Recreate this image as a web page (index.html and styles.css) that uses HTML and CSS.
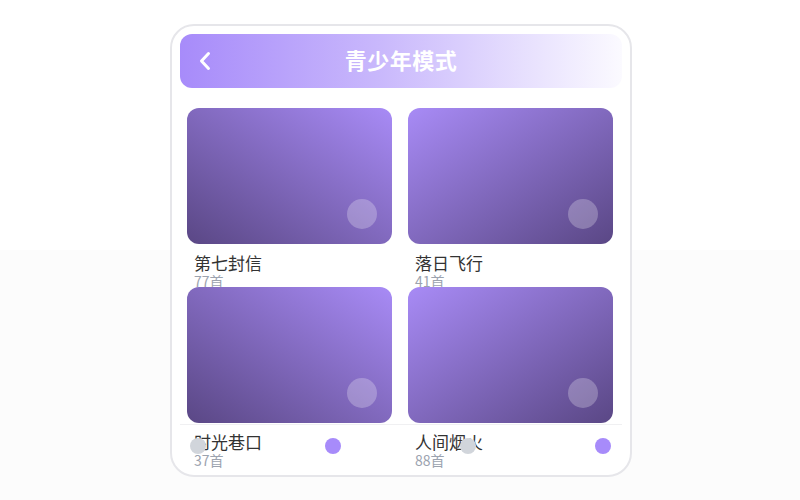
FILE: index.html
```html
<!DOCTYPE html>
<html lang="zh-CN">

<head>
     <meta charset="UTF-8">
     <meta name="viewport" content="width=device-width, initial-scale=1.0">
     <title>青少年模式</title>
     <link rel="stylesheet" href="styles.css">
</head>

<body>
     <div class="phone">
          <div class="top-bar">
               <span class="back">
                    <svg width="14" height="20" viewBox="0 0 14 20">
                         <path d="M10.5 2.5 L3.5 10 L10.5 17.5" fill="none" stroke="#fff" stroke-width="3"
                              stroke-linecap="round" stroke-linejoin="round" />
                    </svg>
               </span>
               <h1>青少年模式</h1>
          </div>

          <div class="album-grid">
               <div class="album">
                    <div class="cover cover-a"><span class="play"></span></div>
                    <div class="album-name">第七封信</div>
                    <div class="album-count">77首</div>
               </div>
               <div class="album">
                    <div class="cover cover-b"><span class="play"></span></div>
                    <div class="album-name">落日飞行</div>
                    <div class="album-count">41首</div>
               </div>
               <div class="album">
                    <div class="cover cover-a"><span class="play"></span></div>
                    <div class="album-name">时光巷口</div>
                    <div class="album-count">37首</div>
               </div>
               <div class="album">
                    <div class="cover cover-b"><span class="play"></span></div>
                    <div class="album-name">人间烟火</div>
                    <div class="album-count">88首</div>
               </div>
          </div>

          <!-- bottom indicator bar, sits over the list -->
          <div class="dock">
               <div class="dots">
                    <span class="dot"></span>
                    <span class="dot on"></span>
                    <span class="dot"></span>
                    <span class="dot on"></span>
               </div>
          </div>
     </div>
</body>

</html>
```

FILE: styles.css
```css
* {
     padding: 0;
     margin: 0;
     box-sizing: border-box;
     font-family: "Noto Sans CJK SC", "Noto Sans", sans-serif;
}

html,
body {
     width: 100%;
     height: 100%;
     overflow: hidden;
}

body {
     background: linear-gradient(to bottom, #ffffff 50%, #fcfcfc 50%);
     padding-top: 24px;
}

.phone {
     position: relative;
     width: 462px;
     height: 453px;
     margin-left: 170px;
     border: 2px solid #e6e6ea;
     border-radius: 24px;
     background: #fff;
     padding: 8px;
     overflow: hidden;
}

.top-bar {
     position: relative;
     height: 54px;
     border-radius: 12px;
     background: linear-gradient(to right, #a78bfa, #c9b8fc 45%, #fbfaff);
     display: flex;
     align-items: center;
     justify-content: center;
     padding-bottom: 4px;
}

.back {
     position: absolute;
     left: 18px;
     top: 17px;
     display: flex;
}

.top-bar h1 {
     font-size: 22px;
     font-weight: 700;
     color: #fff;
     letter-spacing: 0.5px;
}

.album-grid {
     display: grid;
     grid-template-columns: 205px 205px;
     grid-auto-rows: 179px;
     column-gap: 16px;
     padding: 20px 7px 0;
}

.album {
     height: 179px;
}

.cover {
     position: relative;
     height: 136px;
     border-radius: 12px;
}

.cover-a {
     background: linear-gradient(to bottom left, #a88bf6, #5a4785);
}

.cover-b {
     background: linear-gradient(to bottom right, #a88bf6, #5a4785);
}

.play {
     position: absolute;
     right: 15px;
     bottom: 15px;
     width: 30px;
     height: 30px;
     border-radius: 50%;
     background: rgba(255, 255, 255, 0.25);
}

.album-name {
     margin-top: 8px;
     padding-left: 7px;
     font-size: 17px;
     line-height: 22px;
     color: #333;
}

.album-count {
     padding-left: 7px;
     font-size: 14px;
     line-height: 14px;
     color: #9ca3af;
}

.dock {
     position: absolute;
     left: 8px;
     right: 8px;
     bottom: 8px;
     height: 43px;
     border-top: 1px solid #f0f0f2;
     display: flex;
     align-items: center;
     padding: 0 11px 0 10px;
}

.dots {
     width: 100%;
     display: flex;
     justify-content: space-between;
}

.dot {
     width: 16px;
     height: 16px;
     border-radius: 50%;
     background: #d1d5db;
}

.dot.on {
     background: #a78bfa;
}
```
